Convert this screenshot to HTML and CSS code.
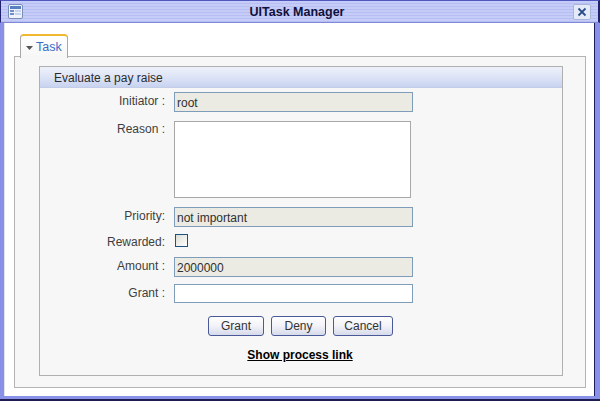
FILE: index.html
```html
<!DOCTYPE html>
<html>
<head>
<meta charset="utf-8">
<link rel="stylesheet" href="styles.css">
</head>
<body>
<div class="window">
  <div class="titlebar">
    <span class="ticon">
      <svg width="15" height="15" viewBox="0 0 15 15">
        <rect x="0.5" y="0.5" width="14" height="14" rx="1.5" fill="#eef2fb" stroke="#7a8cb8"/>
        <rect x="2" y="2" width="11" height="3" fill="#5a7fc0"/>
        <rect x="2" y="6" width="4" height="2" fill="#6f8fcc"/>
        <rect x="7" y="6" width="6" height="2" fill="#c8d4ee"/>
        <rect x="2" y="9" width="4" height="2" fill="#6f8fcc"/>
        <rect x="7" y="9" width="6" height="2" fill="#c8d4ee"/>
      </svg>
    </span>
    <span class="ttext">UITask Manager</span>
    <span class="tclose">
      <svg width="18" height="16" viewBox="0 0 18 16">
        <rect x="0.5" y="0.5" width="17" height="15" rx="1.5" fill="#e4eaf8" stroke="#a8b4d8"/>
        <path d="M5.5 4.5 L12.5 11.5 M12.5 4.5 L5.5 11.5" stroke="#2c4c88" stroke-width="1.8"/>
      </svg>
    </span>
  </div>
  <div class="content">
    <div class="tabs">
      <div class="tab">
        <svg class="arrow" width="7" height="4" viewBox="0 0 7 4"><path d="M0 0 H7 L3.5 4 Z" fill="#555"/></svg>
        <span>Task</span>
      </div>
    </div>
    <div class="panel">
      <div class="fieldset">
        <div class="legend">Evaluate a pay raise</div>
        <div class="form">
          <div class="row r-init">
            <label class="lbl">Initiator :</label>
            <div class="field ro">root</div>
          </div>
          <div class="row r-reason">
            <label class="lbl">Reason :</label>
            <div class="area"></div>
          </div>
          <div class="row r-prio">
            <label class="lbl">Priority:</label>
            <div class="field ro">not important</div>
          </div>
          <div class="row r-rew">
            <label class="lbl">Rewarded:</label>
            <div class="check"></div>
          </div>
          <div class="row r-amt">
            <label class="lbl">Amount :</label>
            <div class="field ro">2000000</div>
          </div>
          <div class="row r-grant">
            <label class="lbl">Grant :</label>
            <div class="field"></div>
          </div>
          <div class="buttons">
            <button class="btn b-grant">Grant</button>
            <button class="btn b-deny">Deny</button>
            <button class="btn b-cancel">Cancel</button>
          </div>
          <div class="linkrow"><a class="plink">Show process link</a></div>
        </div>
      </div>
    </div>
  </div>
</div>
</body>
</html>
```

FILE: styles.css
```css
* { box-sizing: border-box; }
html, body { margin: 0; padding: 0; }
body {
  width: 600px;
  height: 401px;
  overflow: hidden;
  font-family: "Liberation Sans", Arial, sans-serif;
  font-size: 12px;
  color: #3c3c3c;
}
.window {
  width: 600px;
  height: 401px;
  display: flex;
  flex-direction: column;
  background: #ffffff;
  border-left: 4px solid #8890e8;
  border-right: 5px solid #8890e8;
  border-bottom: 5px solid #8890e8;
  box-shadow: inset -1px 0 0 #1c1c60;
  position: relative;
}
.window::after {
  content: "";
  position: absolute;
  left: -4px; right: -5px; bottom: -5px;
  height: 2px;
  background: #1c1c50;
}
.titlebar {
  height: 23px;
  margin-left: -4px;
  margin-right: -5px;
  display: flex;
  align-items: center;
  padding: 0 7px;
  background: repeating-linear-gradient(180deg, #c6ccf8 0px, #c6ccf8 2px, #b6bef2 2px, #b6bef2 3px);
  border-top: 1px solid #5058c0;
  border-bottom: 1px solid #8088d8;
  border-left: 1px solid #202070;
  border-right: 2px solid #202070;
}
.ticon { width: 15px; height: 15px; display: flex; }
.ttext {
  flex: 1;
  text-align: center;
  font-weight: bold;
  font-size: 12.5px;
  color: #10103c;
  padding-right: 2px;
}
.tclose { width: 18px; height: 16px; display: flex; }
.content {
  flex: 1;
  display: flex;
  flex-direction: column;
  padding: 11px 9px 8px 9px;
  border-left: 1px solid #e4e4e4;
}
.tabs {
  display: flex;
  padding-left: 6px;
  height: 23px;
  position: relative;
  z-index: 1;
  margin-bottom: -1px;
}
.tab {
  width: 48px;
  height: 24px;
  border: 1px solid #a8a8a8;
  border-top: 2px solid #f2b830;
  border-bottom: none;
  border-radius: 4px 4px 0 0;
  background: linear-gradient(180deg, #ffffff 0%, #f6f6f6 100%);
  color: #3a6cc8;
  font-size: 12.5px;
  padding: 4px 0 0 5px;
  display: flex;
  align-items: flex-start;
}
.arrow { margin: 6px 3px 0 0; flex: none; }
.panel {
  flex: 1;
  border: 1px solid #b4b4b4;
  background: #f7f7f7;
  padding: 9px 22px 11px 24px;
  display: flex;
  flex-direction: column;
}
.fieldset {
  flex: 1;
  border: 1px solid #b0b0b0;
  background: #f7f7f7;
  display: flex;
  flex-direction: column;
}
.legend {
  height: 21px;
  padding: 4px 0 0 14px;
  background: linear-gradient(180deg, #eef1fa 0%, #dde4f6 50%, #c8d3f0 100%);
  border-bottom: 1px solid #c4cde8;
  font-size: 12px;
  color: #2c2c2c;
}
.form {
  display: flex;
  flex-direction: column;
  padding-top: 4px;
}
.row {
  display: flex;
  align-items: flex-start;
  gap: 9px;
}
.lbl {
  width: 125px;
  text-align: right;
  font-size: 12px;
  color: #3e3e3e;
  padding-top: 2px;
}
.field {
  width: 239px;
  height: 20px;
  border: 1px solid #7f9db9;
  background: #ffffff;
  font-size: 12px;
  color: #303030;
  padding: 3px 0 0 2px;
}
.field.ro { background: #ebebe4; }
.area {
  width: 237px;
  height: 77px;
  border: 1px solid #a8a8a8;
  background: #ffffff;
}
.r-reason { margin-top: 9px; }
.r-reason .lbl { padding-top: 1px; }
.r-prio { margin-top: 9px; }
.r-rew { margin-top: 6px; height: 17px; }
.check {
  width: 13px;
  height: 13px;
  border: 1px solid #1c5180;
  background: linear-gradient(135deg, #dcdcd6 0%, #ffffff 100%);
  margin-top: 1px;
  margin-left: 1px;
}
.r-amt { margin-top: 7px; }
.r-grant { margin-top: 7px; }
.r-grant .field { height: 19px; }
.buttons {
  display: flex;
  justify-content: center;
  gap: 7px;
  margin-top: 13px;
  padding-right: 1px;
}
.btn {
  height: 20px;
  font-family: inherit;
  font-size: 12px;
  color: #333;
  border: 1px solid #4a5a98;
  border-radius: 3px;
  background: linear-gradient(180deg, #ffffff 0%, #f2f2f8 50%, #d6daea 100%);
  padding: 0;
}
.b-grant { width: 56px; }
.b-deny { width: 55px; }
.b-cancel { width: 60px; }
.linkrow {
  text-align: center;
  margin-top: 12px;
  padding-right: 2px;
}
.plink {
  font-weight: bold;
  font-size: 12px;
  color: #000;
  text-decoration: underline;
}
```
